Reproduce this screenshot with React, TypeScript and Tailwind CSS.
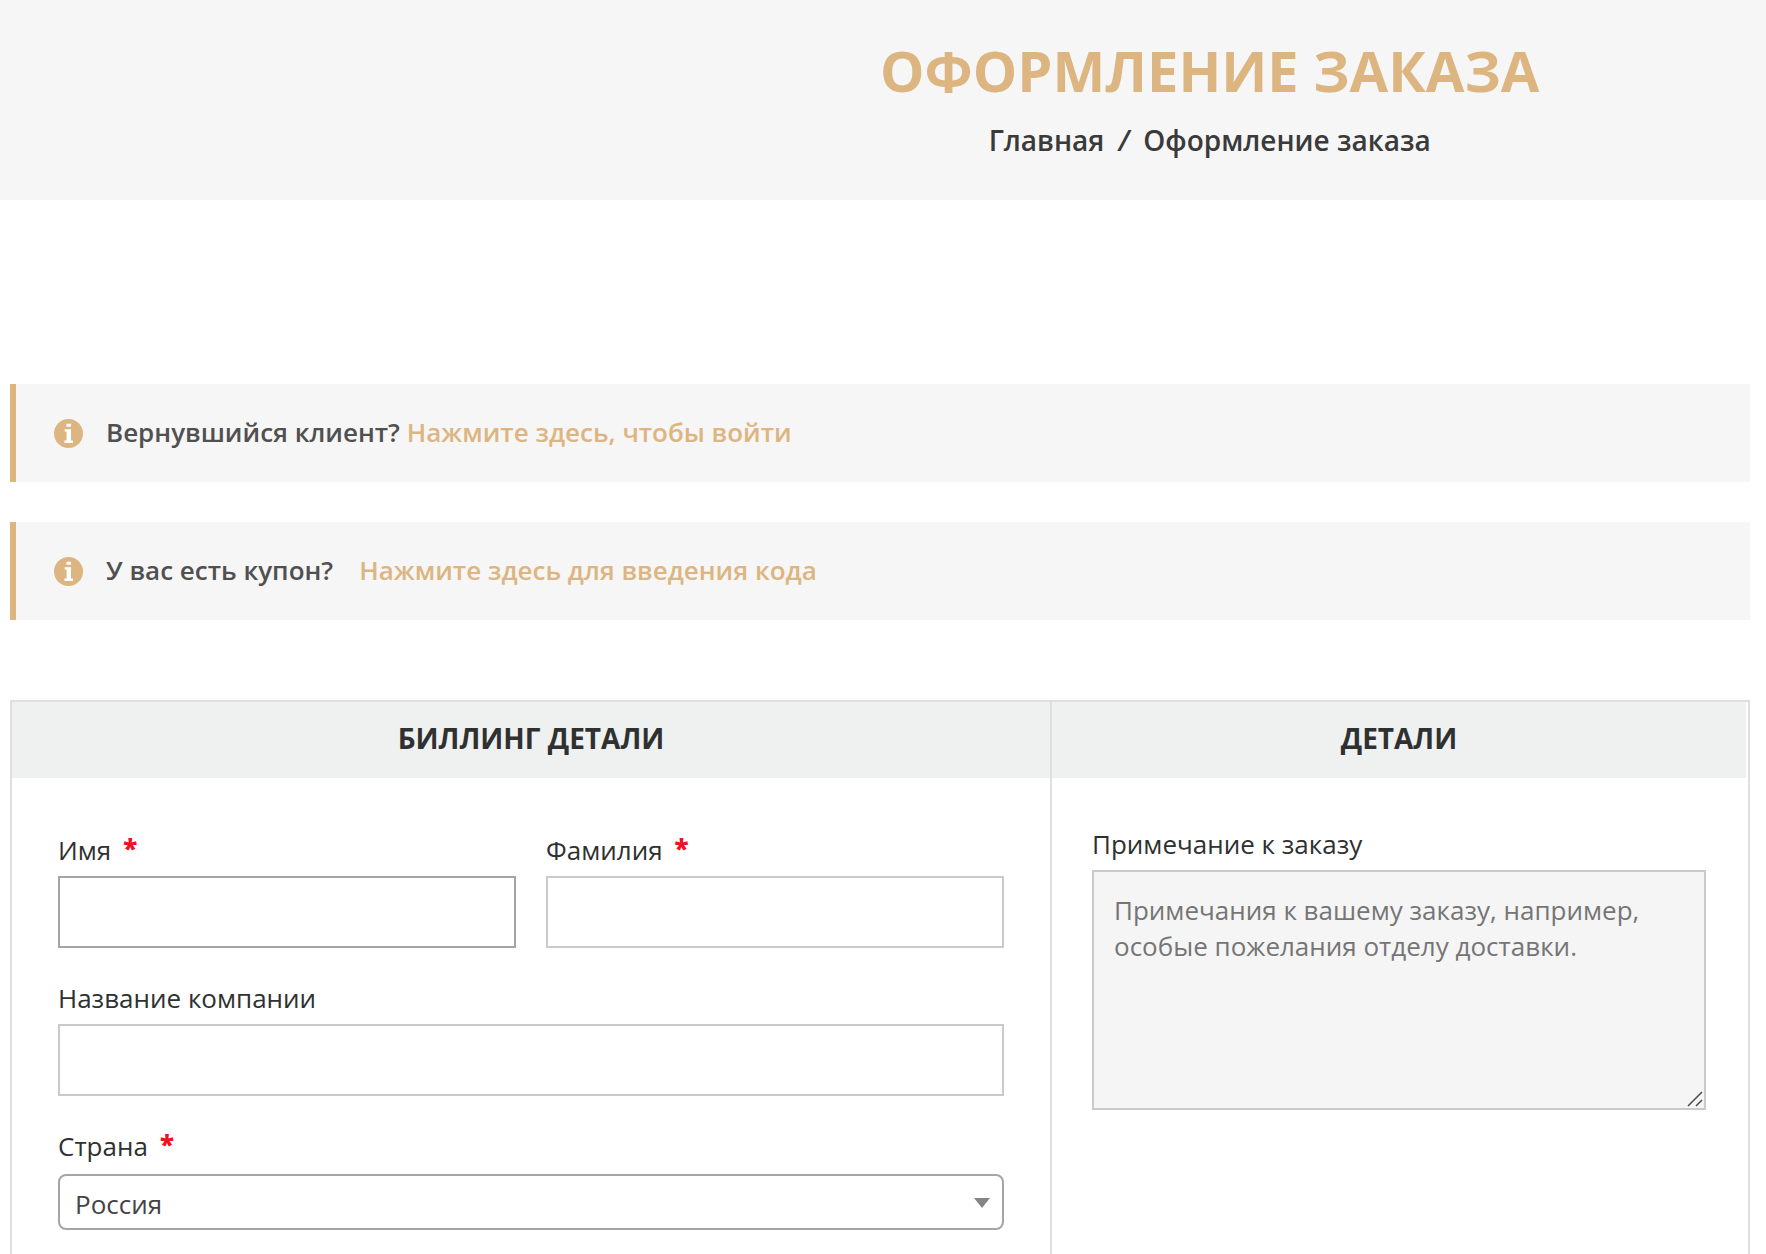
import { useState } from "react";
import type { ReactNode } from "react";

interface FieldLabelProps {
  htmlFor: string;
  required?: boolean;
  children: ReactNode;
}

function FieldLabel({ htmlFor, required, children }: FieldLabelProps) {
  return (
    <label htmlFor={htmlFor} className="flex mb-2 text-[26px] leading-9 text-[#2f3131]">
      {children}
      {required && (
        <abbr title="обязательно" className="ml-3 leading-8 font-extrabold text-[#ee1122] no-underline">*</abbr>
      )}
    </label>
  );
}

function InfoIcon() {
  return (
    <svg className="w-[29px] h-[29px] shrink-0 mt-0.5" viewBox="0 0 29 29" aria-hidden="true">
      <circle cx="14.5" cy="14.5" r="14.5" fill="#dcb581" />
      <path d="M12.4 4.8h4.6v3h-4.6zM10.6 10.2h6.4v11.4h2v2.4h-8.6v-2.4h2.2v-9h-2z" fill="#fff" />
    </svg>
  );
}

function Notice({ children }: { children: ReactNode }) {
  return (
    <div className="flex items-center min-h-[98px] pb-0.5 pl-[38px] pr-6 border-l-[6px] border-[#dcb581] bg-[#f6f6f6] text-[26px] leading-9 font-semibold text-[#505050]">
      <InfoIcon />
      <p className="ml-[23px]">{children}</p>
    </div>
  );
}

export default function App() {
  const [firstName, setFirstName] = useState<string>("");
  const [lastName, setLastName] = useState<string>("");
  const [company, setCompany] = useState<string>("");
  const [country, setCountry] = useState<string>("RU");
  const [notes, setNotes] = useState<string>("");

  return (
    <div className="min-h-screen flex flex-col bg-white font-['Open_Sans','Noto_Sans',sans-serif]">
      {/* Page title */}
      <header className="bg-[#f6f6f6] pt-[38px] pb-10 pl-[37%] text-center">
        <h1 className="text-[56px] leading-[64px] font-bold uppercase text-[#dcb581]">Оформление заказа</h1>
        <nav className="mt-[18px] flex justify-center gap-3.5 text-[28px] leading-10 font-semibold text-[#3a3a3a]">
          <a href="#home">Главная</a>
          <span className="italic">/</span>
          <span>Оформление заказа</span>
        </nav>
      </header>

      <main className="flex-1 flex flex-col pt-[184px] pl-2.5 pr-4">
        <div className="flex flex-col gap-10">
          <Notice>
            Вернувшийся клиент?{" "}
            <a href="#login" className="text-[#dcb581]">Нажмите здесь, чтобы войти</a>
          </Notice>
          <Notice>
            У вас есть купон?
            <a href="#coupon" className="ml-[26px] text-[#dcb581]">Нажмите здесь для введения кода</a>
          </Notice>
        </div>

        <form className="flex-1 mt-20 grid grid-cols-[1040fr_696fr] border-2 border-b-0 border-[#dfdfdf]">
          {/* Billing */}
          <section className="border-r-2 border-[#dfdfdf]">
            <h2 className="pt-4 pb-5 bg-[#eff1f0] text-center text-[28px] leading-10 font-bold uppercase text-[#2f3131]">
              Биллинг детали
            </h2>
            <div className="px-[46px] pt-[54px] pb-6 flex flex-col gap-8">
              <div className="grid grid-cols-2 gap-[30px]">
                <div>
                  <FieldLabel htmlFor="first-name" required>Имя</FieldLabel>
                  <input
                    id="first-name"
                    type="text"
                    value={firstName}
                    onChange={(e) => setFirstName(e.target.value)}
                    className="block w-full h-[72px] px-5 border-2 border-[#a5a5a5] text-[26px] outline-none"
                  />
                </div>
                <div>
                  <FieldLabel htmlFor="last-name" required>Фамилия</FieldLabel>
                  <input
                    id="last-name"
                    type="text"
                    value={lastName}
                    onChange={(e) => setLastName(e.target.value)}
                    className="block w-full h-[72px] px-5 border-2 border-[#cacaca] text-[26px] outline-none focus:border-[#a5a5a5]"
                  />
                </div>
              </div>

              <div>
                <FieldLabel htmlFor="company">Название компании</FieldLabel>
                <input
                  id="company"
                  type="text"
                  value={company}
                  onChange={(e) => setCompany(e.target.value)}
                  className="block w-full h-[72px] px-5 border-2 border-[#cacaca] text-[26px] outline-none focus:border-[#a5a5a5]"
                />
              </div>

              <div>
                <FieldLabel htmlFor="country" required>Страна</FieldLabel>
                <div className="relative mt-2.5">
                  <select
                    id="country"
                    value={country}
                    onChange={(e) => setCountry(e.target.value)}
                    className="block w-full h-14 pl-[15px] pr-12 pt-1 border-2 border-[#a5a5a5] rounded-lg bg-white appearance-none text-[26px] leading-9 text-[#444444] outline-none"
                  >
                    <option value="RU">Россия</option>
                    <option value="BY">Беларусь</option>
                    <option value="KZ">Казахстан</option>
                  </select>
                  <svg className="absolute right-3.5 top-6 w-4 h-2.5 pointer-events-none" viewBox="0 0 16 10" fill="#858585" aria-hidden="true">
                    <path d="M0 0h16L8 10z" />
                  </svg>
                </div>
              </div>
            </div>
          </section>

          {/* Order notes */}
          <section>
            <h2 className="mr-0.5 pt-4 pb-5 bg-[#eff1f0] text-center text-[28px] leading-10 font-bold uppercase text-[#2f3131]">
              Детали
            </h2>
            <div className="pl-10 pr-[42px] pt-12 pb-6">
              <FieldLabel htmlFor="notes">Примечание к заказу</FieldLabel>
              <div className="relative">
                <textarea
                  id="notes"
                  value={notes}
                  onChange={(e) => setNotes(e.target.value)}
                  placeholder="Примечания к вашему заказу, например, особые пожелания отделу доставки."
                  className="block w-full h-60 px-5 py-5 border-2 border-[#cacaca] bg-[#f5f5f5] resize-none text-[26px] leading-9 text-[#444444] placeholder:text-[#757575] outline-none"
                />
                <svg className="absolute right-[3px] bottom-[3px] w-4 h-4 pointer-events-none" viewBox="0 0 16 16" fill="none" stroke="#4a4a4a" strokeWidth="1.5" aria-hidden="true">
                  <path d="M1 15L15 1M9 15l6-6" />
                </svg>
              </div>
            </div>
          </section>
        </form>
      </main>
    </div>
  );
}
